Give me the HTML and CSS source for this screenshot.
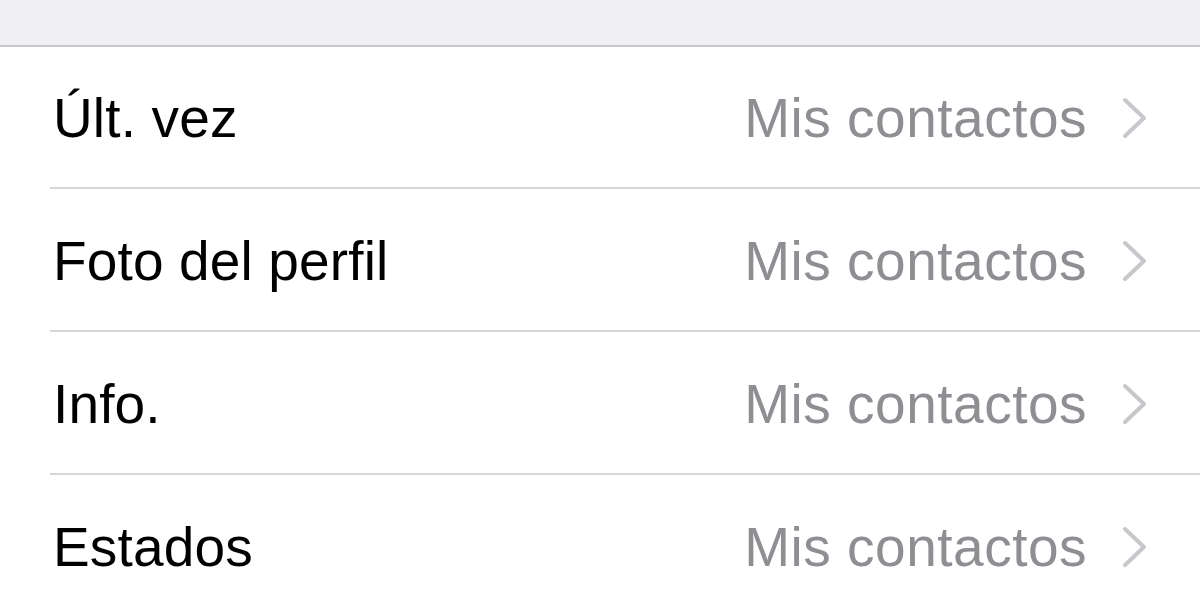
FILE: index.html
```html
<!DOCTYPE html>
<html lang="es">
<head>
<meta charset="utf-8">
<title>Privacidad</title>
<link rel="stylesheet" href="styles.css">
</head>
<body>
<div class="section-gap"></div>
<ul class="settings-list">
  <li class="settings-row">
    <span class="row-label">Últ. vez</span>
    <span class="row-value">Mis contactos</span>
    <svg class="chevron" viewBox="0 0 26 42" aria-hidden="true"><path d="M3 3 L22 21 L3 39"/></svg>
  </li>
  <li class="settings-row">
    <span class="row-label">Foto del perfil</span>
    <span class="row-value">Mis contactos</span>
    <svg class="chevron" viewBox="0 0 26 42" aria-hidden="true"><path d="M3 3 L22 21 L3 39"/></svg>
  </li>
  <li class="settings-row">
    <span class="row-label">Info.</span>
    <span class="row-value">Mis contactos</span>
    <svg class="chevron" viewBox="0 0 26 42" aria-hidden="true"><path d="M3 3 L22 21 L3 39"/></svg>
  </li>
  <li class="settings-row">
    <span class="row-label">Estados</span>
    <span class="row-value">Mis contactos</span>
    <svg class="chevron" viewBox="0 0 26 42" aria-hidden="true"><path d="M3 3 L22 21 L3 39"/></svg>
  </li>
</ul>
</body>
</html>
```

FILE: styles.css
```css
html, body {
  margin: 0;
  padding: 0;
  background: #ffffff;
}

body {
  font-family: "Liberation Sans", Arial, sans-serif;
  overflow: hidden;
}

.section-gap {
  height: 45px;
  background: #efeff4;
  border-bottom: 2px solid #c8c7cc;
}

.settings-list {
  list-style: none;
  margin: 0;
  padding: 0;
}

.settings-row {
  box-sizing: border-box;
  display: flex;
  align-items: center;
  height: 143px;
  margin-left: 50px;
  padding-top: 2px;
  padding-right: 52px;
  border-bottom: 2px solid #d6d5d9;
}

.settings-row:first-child {
  height: 142px;
  padding-top: 1px;
}

.row-label {
  flex: 1;
  padding-left: 3px;
  font-size: 55px;
  letter-spacing: 0.15px;
  color: #000000;
}

.row-value {
  font-size: 55px;
  letter-spacing: 0.5px;
  color: #8e8e93;
}

.chevron {
  width: 26px;
  height: 42px;
  margin-left: 35px;
  margin-top: 1px;
  fill: none;
  stroke: #c7c7cc;
  stroke-width: 4;
  stroke-linecap: round;
  stroke-linejoin: round;
}
```
